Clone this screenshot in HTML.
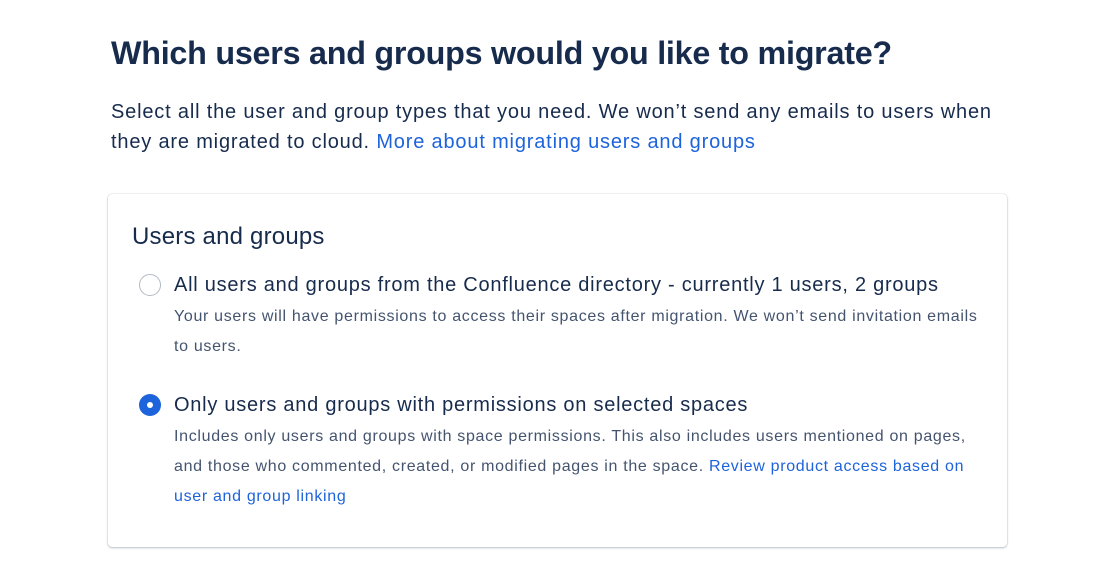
<!DOCTYPE html>
<html><head><style>
body{margin:0;background:#fff;font-family:"Liberation Sans",sans-serif;color:#172B4D;width:1113px;height:570px;overflow:hidden;position:relative}
h1{position:absolute;left:111px;top:31px;margin:0;font-size:32.3px;font-weight:600;letter-spacing:-0.25px;line-height:44px;white-space:nowrap}
.p{position:absolute;left:111px;top:97px;font-size:20px;line-height:30px;width:920px;letter-spacing:0.82px}
a{color:#1D63DB;text-decoration:none}
.card{position:absolute;left:108px;top:194px;width:899px;height:353px;border-radius:4px;box-shadow:0 0 1px rgba(9,30,66,.31),0 1px 2px rgba(9,30,66,.25);box-sizing:border-box}
.h2{position:absolute;left:132px;top:222px;font-size:24px;line-height:30px;letter-spacing:0.2px}
.r{position:absolute;left:139px;width:22px;height:22px;border-radius:50%;box-sizing:border-box}
.lbl{position:absolute;left:174px;font-size:20px;line-height:26px;letter-spacing:0.75px;white-space:nowrap}
.d{position:absolute;left:174px;font-size:16px;line-height:30px;color:#44546F;width:830px;letter-spacing:0.68px;white-space:nowrap}
</style></head><body>
<h1>Which users and groups would you like to migrate?</h1>
<div class="p">Select all the user and group types that you need. We won’t send any emails to users when<br>they are migrated to cloud. <a>More about migrating users and groups</a></div>
<div class="card"></div>
<div class="h2">Users and groups</div>
<div class="r" style="top:274px;border:1.5px solid #B3B9C4"></div>
<div class="lbl" style="top:272px">All users and groups from the Confluence directory - currently 1 users, 2 groups</div>
<div class="d" style="top:302px">Your users will have permissions to access their spaces after migration. We won’t send invitation emails<br>to users.</div>
<div class="r" style="top:394px;background:#1D63DB"><div style="position:absolute;left:8px;top:8px;width:6px;height:6px;border-radius:50%;background:#fff"></div></div>
<div class="lbl" style="top:392px">Only users and groups with permissions on selected spaces</div>
<div class="d" style="top:422px">Includes only users and groups with space permissions. This also includes users mentioned on pages,<br>and those who commented, created, or modified pages in the space. <a>Review product access based on<br>user and group linking</a></div>
</body></html>
